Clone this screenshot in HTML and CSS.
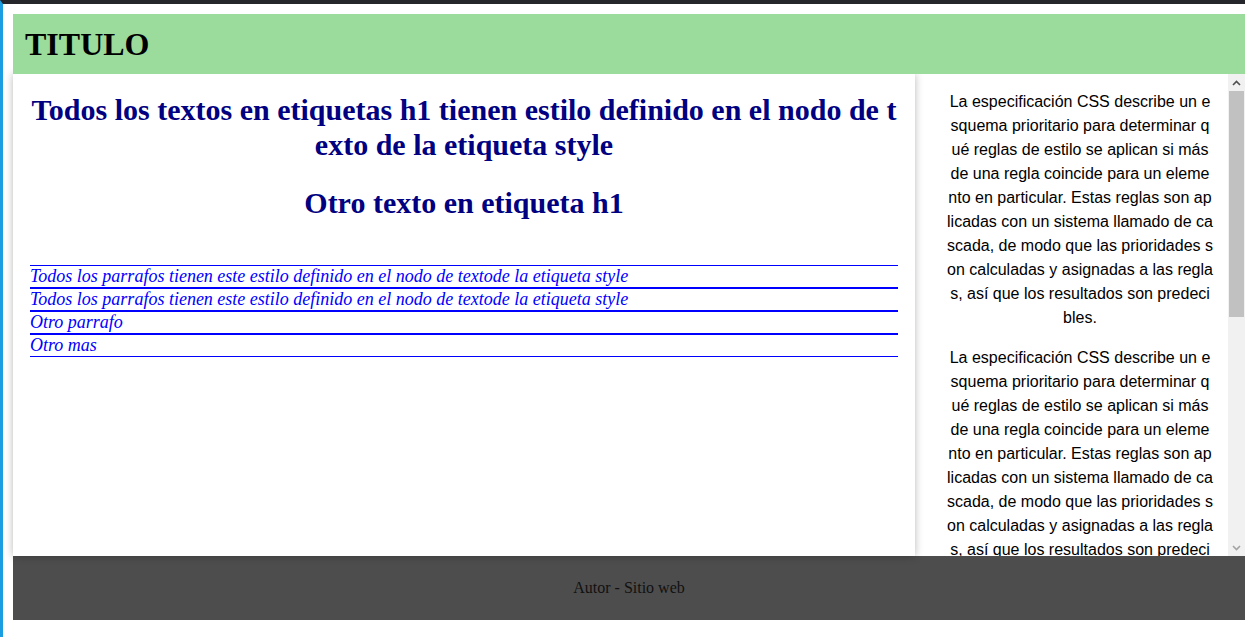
FILE: index.html
```html
<!DOCTYPE html>
<html lang="es">
<head>
<meta charset="utf-8">
<title>TITULO</title>
<link rel="stylesheet" href="styles.css">
</head>
<body>
<div class="frame">
  <div class="page">
    <header class="header"><h1 class="title">TITULO</h1></header>
    <div class="content">
      <main class="main">
        <h1 class="heading">Todos los textos en etiquetas h1 tienen estilo definido en el nodo de texto de la etiqueta style</h1>
        <h1 class="heading">Otro texto en etiqueta h1</h1>
        <div class="paras">
          <p class="para">Todos los parrafos tienen este estilo definido en el nodo de textode la etiqueta style</p>
          <p class="para">Todos los parrafos tienen este estilo definido en el nodo de textode la etiqueta style</p>
          <p class="para">Otro parrafo</p>
          <p class="para">Otro mas</p>
        </div>
      </main>
      <aside class="aside">
        <div class="aside-text">
          <p class="aside-p">La especificación CSS describe un esquema prioritario para determinar qué reglas de estilo se aplican si más de una regla coincide para un elemento en particular. Estas reglas son aplicadas con un sistema llamado de cascada, de modo que las prioridades son calculadas y asignadas a las reglas, así que los resultados son predecibles.</p>
          <p class="aside-p">La especificación CSS describe un esquema prioritario para determinar qué reglas de estilo se aplican si más de una regla coincide para un elemento en particular. Estas reglas son aplicadas con un sistema llamado de cascada, de modo que las prioridades son calculadas y asignadas a las reglas, así que los resultados son predecibles.</p>
        </div>
        <div class="scrollbar">
          <div class="sb-btn"><svg width="9" height="6" viewBox="0 0 9 6"><path d="M1 5 L4.5 1.5 L8 5" fill="none" stroke="#505050" stroke-width="1.6"/></svg></div>
          <div class="sb-track"><div class="sb-thumb"></div></div>
          <div class="sb-btn"><svg width="9" height="6" viewBox="0 0 9 6"><path d="M1 1 L4.5 4.5 L8 1" fill="none" stroke="#a3a3a3" stroke-width="1.6"/></svg></div>
        </div>
      </aside>
    </div>
    <footer class="footer">Autor - Sitio web</footer>
  </div>
</div>
</body>
</html>
```
FILE: styles.css
```css
html, body {
  margin: 0;
  padding: 0;
  background: #ffffff;
}
.frame {
  height: 637px;
  box-sizing: border-box;
  border-top: 4px solid #25262b;
  border-left: 3px solid #1b9de2;
  padding: 10px 0 0 10px;
}
.page {
  display: grid;
  grid-template-rows: 60px 482px 64px;
}
.header {
  background: #9bdb9b;
  display: flex;
  align-items: center;
  padding-left: 12px;
  position: relative;
  z-index: 3;
}
.title {
  margin: 0;
  font-family: "Liberation Serif", serif;
  font-weight: bold;
  font-size: 32px;
  color: #000;
}
.content {
  display: flex;
  min-height: 0;
}
.main {
  width: 868px;
  padding: 0 17px;
  background: #fff;
  box-shadow: 0 0 8px rgba(0, 0, 0, 0.28);
  position: relative;
  z-index: 2;
}
.heading {
  font-family: "Liberation Serif", serif;
  font-weight: bold;
  font-size: 30px;
  color: #000080;
  text-align: center;
  word-break: break-all;
  margin: 18px 0 0;
  line-height: 35px;
}
.heading + .heading {
  margin-top: 23px;
}
.paras {
  margin-top: 45px;
}
.para {
  margin: 0;
  border-top: 1px solid #0000ff;
  border-bottom: 1px solid #0000ff;
  font-family: "Liberation Serif", serif;
  font-style: italic;
  font-size: 18px;
  line-height: 21px;
  color: #0000ff;
}
.aside {
  flex: 1;
  display: flex;
  min-width: 0;
  background: #fff;
}
.aside-text {
  flex: 1;
  overflow: hidden;
  padding: 0 15px 0 32px;
  min-width: 0;
}
.aside-p {
  margin: 16px 0;
  font-family: "Liberation Sans", Arial, sans-serif;
  font-size: 16px;
  line-height: 24px;
  text-align: center;
  word-break: break-all;
  color: #000;
}
.scrollbar {
  width: 17px;
  background: #f1f1f1;
  display: flex;
  flex-direction: column;
}
.sb-btn {
  height: 17px;
  display: flex;
  align-items: center;
  justify-content: center;
}
.sb-track {
  flex: 1;
  padding: 0 1px;
}
.sb-thumb {
  height: 226px;
  background: #c1c1c1;
}
.footer {
  background: #4d4d4d;
  display: flex;
  align-items: center;
  justify-content: center;
  font-family: "Liberation Serif", serif;
  font-size: 16px;
  color: #111;
  position: relative;
  z-index: 1;
}
```
